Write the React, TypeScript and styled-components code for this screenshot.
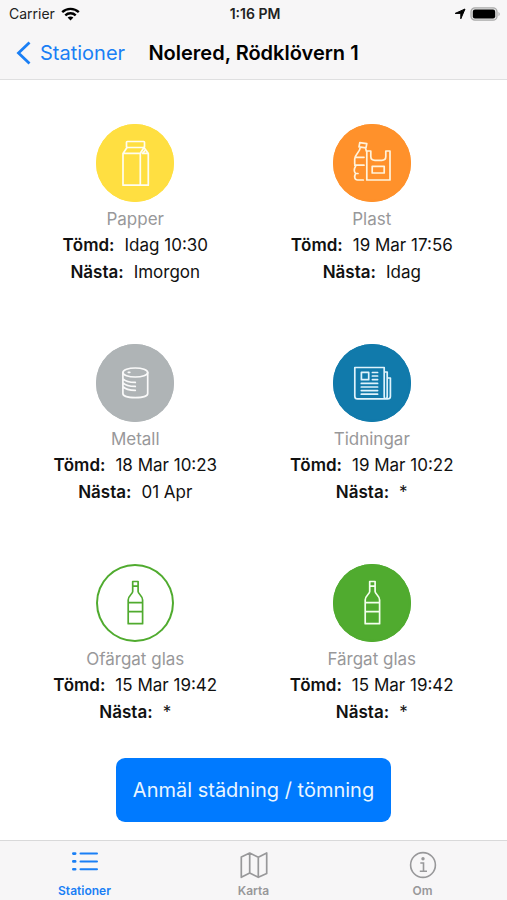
import React from "react";
import styled, { createGlobalStyle } from "styled-components";

const GlobalStyle = createGlobalStyle`
  * { box-sizing: border-box; }
  html, body { margin: 0; padding: 0; background: #fff; }
  body, button { font-family: Inter, "Liberation Sans", sans-serif; }
`;

const Screen = styled.div`
  display: flex;
  flex-direction: column;
  min-height: 100vh;
  background: #fff;
  color: #111;
`;

const Header = styled.header`
  background: #f7f6f7;
  border-bottom: 1px solid #dfdfe0;
`;

const StatusBar = styled.div`
  display: grid;
  grid-template-columns: 1fr auto 1fr;
  align-items: center;
  height: 27px;
  padding: 0 6px 0 9px;
  font-size: 14px;
  line-height: 20px;
  color: #222;
`;

const StatusGroup = styled.div<{ $end?: boolean }>`
  display: flex;
  align-items: center;
  gap: ${(p) => (p.$end ? "4px" : "6px")};
  justify-content: ${(p) => (p.$end ? "flex-end" : "flex-start")};
`;

const Clock = styled.time`
  font-size: 14px;
  font-weight: 600;
`;

const NavBar = styled.nav`
  display: grid;
  grid-template-columns: 1fr auto 1fr;
  align-items: center;
  height: 52px;
  padding: 0 16px;
`;

const BackButton = styled.button`
  display: flex;
  align-items: center;
  gap: 9px;
  padding: 0;
  border: 0;
  background: none;
  color: #1a7ff5;
  font-size: 20px;
  line-height: 26px;
  cursor: pointer;
`;

const Title = styled.h1`
  margin: 0;
  font-size: 20px;
  line-height: 26px;
  font-weight: 600;
  color: #000;
  white-space: nowrap;
`;

const Main = styled.main`
  flex: 1;
  display: flex;
  flex-direction: column;
  align-items: center;
  padding: 44px 17px 18px;
`;

const StationGrid = styled.div`
  display: grid;
  grid-template-columns: 1fr 1fr;
  row-gap: 58px;
  width: 100%;
`;

const Fraction = styled.section`
  display: flex;
  flex-direction: column;
  align-items: center;
`;

const Disc = styled.div<{ $fill: string; $ring: string; $ink: string }>`
  width: 78px;
  height: 78px;
  border-radius: 50%;
  background: ${(p) => p.$fill};
  box-shadow: inset 0 0 0 2px ${(p) => p.$ring};
  color: ${(p) => p.$ink};
  margin-bottom: 4px;

  svg { display: block; }
`;

const FractionName = styled.h2`
  margin: 0;
  font-size: 17px;
  line-height: 26px;
  font-weight: 400;
  color: #98989a;
`;

const Times = styled.dl`
  display: flex;
  flex-direction: column;
  align-items: center;
  margin: 0;
`;

const TimeRow = styled.div`
  display: flex;
  gap: 10px;
  font-size: 17px;
  line-height: 27px;
`;

const TimeLabel = styled.dt`
  font-weight: 600;
`;

const TimeValue = styled.dd`
  margin: 0;
`;

const ReportButton = styled.button`
  margin-top: 32px;
  padding: 18px 17px;
  border: 0;
  border-radius: 9px;
  background: #007aff;
  color: #e9f5ff;
  font-size: 20px;
  line-height: 28px;
  cursor: pointer;
`;

const TabBar = styled.nav`
  display: grid;
  grid-template-columns: repeat(3, 1fr);
  height: 61px;
  background: #f7f6f7;
  border-top: 1px solid #d9d9da;
`;

const Tab = styled.button<{ $active?: boolean }>`
  display: flex;
  flex-direction: column;
  align-items: center;
  justify-content: flex-end;
  gap: 4px;
  padding: 0 0 2px;
  border: 0;
  background: none;
  color: ${(p) => (p.$active ? "#1a7ff5" : "#98989a")};
  font-size: 12px;
  line-height: 16px;
  font-weight: 600;
  cursor: pointer;
`;

const Drawing = ({ children }: { children: React.ReactNode }) => (
  <svg
    width="78"
    height="78"
    viewBox="0 0 78 78"
    fill="none"
    stroke="currentColor"
    strokeWidth="1.7"
    strokeLinejoin="round"
    strokeLinecap="round"
    aria-hidden="true"
  >
    {children}
  </svg>
);

const CartonIcon = () => (
  <Drawing>
    <rect x="30.5" y="17.5" width="18" height="6" rx="0.8" />
    <path d="M31 23.5 27 29.5V61.2H52.3V29.5L48 23.5M27 29.3H44.3M44.3 61V29.3L48 23.5M49.5 26 46.5 29.3H52.3" />
  </Drawing>
);

const PlasticIcon = () => (
  <Drawing>
    <path d="M26.8 18.7 33.8 19.7 33 23.8 26 22.8ZM27.2 23.5C27.2 28 22 30 21.7 35V40L22.6 42.2C20.5 45.5 21.3 48 22.6 49.5C21 52.5 21.5 56 24.5 56H30.3M32.5 24 33.3 27M22.3 33.3H31M21.8 41.2H31M22.6 49.5H25" />
    <path d="M33.8 27H37.8V32.5C37.8 35 39.5 36.3 42 36.3H48.8C51.3 36.3 52.8 35 52.8 32.5V27H57V56H33.8Z" />
    <rect x="39.2" y="42.3" width="12" height="6.7" />
  </Drawing>
);

const CanIcon = () => (
  <Drawing>
    <ellipse cx="39.3" cy="28.5" rx="12.4" ry="4.5" />
    <path d="M26.9 28.5V49.5C26.9 52 32 53.7 39.3 53.7S51.7 52 51.7 49.5V28.5M32.3 28.3H33.8M27.2 35C29.5 37.7 34 38.4 39.3 38.4M27.2 39C29.5 41.7 34 42.4 39.3 42.4M27.2 42.9C29.5 45.6 34 46.3 39.3 46.3" />
  </Drawing>
);

const NewspaperIcon = () => (
  <Drawing>
    <path d="M21.8 23.5H51.2V52.5Q51.2 54.9 53 54.9H24.5Q21.8 54.9 21.8 52.2ZM51.2 28H54.2V52.3Q54.2 54.9 52.5 54.9H54.6Q57.4 54.9 57.4 52.2V34H54.2" />
    <rect x="28.4" y="28.4" width="7.3" height="7.3" />
    <path d="M39.4 28.5H44.6M39.4 32H44.6M39.4 35.6H44.6M28.3 39.4H44.6M28.3 43H44.6M28.3 46.6H44.6M28.3 50.2H44.6" />
  </Drawing>
);

const BottleIcon = () => (
  <Drawing>
    <path d="M36.7 17.5H42.1V27.5C42.1 30 46.6 31.5 46.6 36V59.7H32.2V36C32.2 31.5 36.7 30 36.7 27.5ZM36.7 22.2H42.1M32.2 38.7H46.6M32.2 47.7H46.6" />
  </Drawing>
);

const WifiIcon = () => (
  <svg width="19" height="14" viewBox="0 0 19 14" fill="none" stroke="#000" strokeWidth="2.4" aria-hidden="true">
    <path d="M1.2 5.1C5.8.8 13.2.8 17.8 5.1M4.3 8.3C7.2 5.6 11.8 5.6 14.7 8.3" />
    <path d="M9.5 13.4 6.6 10.5C8.2 9 10.8 9 12.4 10.5Z" fill="#000" stroke="none" />
  </svg>
);

const LocationIcon = () => (
  <svg width="12" height="12" viewBox="0 0 12 12" aria-hidden="true">
    <path d="M11 1 6.8 10.8V5.4H1.2Z" fill="#000" stroke="#000" strokeWidth="1" strokeLinejoin="round" />
  </svg>
);

const BatteryIcon = () => (
  <svg width="31" height="14" viewBox="0 0 31 14" aria-hidden="true">
    <rect x="1" y="0.8" width="26" height="12.4" rx="4" fill="#e4e4e4" stroke="#aaa" strokeWidth="1.3" />
    <rect x="2.8" y="2.5" width="22.4" height="9" rx="2.2" fill="#000" />
    <path d="M28.5 4.7Q31 7 28.5 9.3Z" fill="#aaa" />
  </svg>
);

const ChevronIcon = () => (
  <svg width="15" height="24" viewBox="0 0 15 24" fill="none" stroke="currentColor" strokeWidth="2.8" aria-hidden="true">
    <path d="M13.5 1.5 2.5 12 13.5 22.5" />
  </svg>
);

const ListIcon = () => (
  <svg width="28" height="28" viewBox="0 0 28 28" fill="none" stroke="currentColor" strokeWidth="2" strokeLinecap="round" aria-hidden="true">
    <path d="M9.5 2.6H26M9.5 10.4H26M9.5 18.2H26" />
    <path d="M2.3 2.6H4.2M2.3 10.4H4.2M2.3 18.2H4.2" strokeWidth="2.6" />
  </svg>
);

const MapIcon = () => (
  <svg width="28" height="28" viewBox="0 0 28 28" fill="none" stroke="currentColor" strokeWidth="1.7" strokeLinejoin="round" aria-hidden="true">
    <path d="M1.3 6 9.7 2 18.3 6.3 26.7 2V22.5L18.3 26.3 9.7 22 1.3 26.3ZM9.7 2V22M18.3 6.3V26.3" />
  </svg>
);

const InfoIcon = () => (
  <svg width="28" height="28" viewBox="0 0 28 28" fill="none" stroke="currentColor" strokeWidth="1.6" aria-hidden="true">
    <circle cx="14" cy="14" r="12.4" />
    <circle cx="14" cy="7.8" r="1.7" fill="currentColor" stroke="none" />
    <path d="M11.3 12H14.5V20.2M10.8 20.2H18" />
  </svg>
);

const fractions = [
  { name: "Papper", emptied: "Idag 10:30", next: "Imorgon", fill: "#ffdf41", ring: "#ffdf41", ink: "#fffdf0", Icon: CartonIcon },
  { name: "Plast", emptied: "19 Mar 17:56", next: "Idag", fill: "#ff912b", ring: "#ff912b", ink: "#fff3dc", Icon: PlasticIcon },
  { name: "Metall", emptied: "18 Mar 10:23", next: "01 Apr", fill: "#afb4b6", ring: "#afb4b6", ink: "#fafafa", Icon: CanIcon },
  { name: "Tidningar", emptied: "19 Mar 10:22", next: "*", fill: "#117aab", ring: "#117aab", ink: "#dff3fc", Icon: NewspaperIcon },
  { name: "Ofärgat glas", emptied: "15 Mar 19:42", next: "*", fill: "#ffffff", ring: "#50ab2f", ink: "#50ab2f", Icon: BottleIcon },
  { name: "Färgat glas", emptied: "15 Mar 19:42", next: "*", fill: "#50ab2f", ring: "#50ab2f", ink: "#f4ffee", Icon: BottleIcon },
];

export default function App() {
  return (
    <Screen>
      <GlobalStyle />
      <Header>
        <StatusBar>
          <StatusGroup>
            <span>Carrier</span>
            <WifiIcon />
          </StatusGroup>
          <Clock>1:16 PM</Clock>
          <StatusGroup $end>
            <LocationIcon />
            <BatteryIcon />
          </StatusGroup>
        </StatusBar>
        <NavBar>
          <BackButton type="button">
            <ChevronIcon />
            Stationer
          </BackButton>
          <Title>Nolered, Rödklövern 1</Title>
        </NavBar>
      </Header>
      <Main>
        <StationGrid>
          {fractions.map(({ name, emptied, next, fill, ring, ink, Icon }) => (
            <Fraction key={name}>
              <Disc $fill={fill} $ring={ring} $ink={ink}>
                <Icon />
              </Disc>
              <FractionName>{name}</FractionName>
              <Times>
                <TimeRow>
                  <TimeLabel>Tömd:</TimeLabel>
                  <TimeValue>{emptied}</TimeValue>
                </TimeRow>
                <TimeRow>
                  <TimeLabel>Nästa:</TimeLabel>
                  <TimeValue>{next}</TimeValue>
                </TimeRow>
              </Times>
            </Fraction>
          ))}
        </StationGrid>
        <ReportButton type="button">Anmäl städning / tömning</ReportButton>
      </Main>
      <TabBar>
        <Tab type="button" $active>
          <ListIcon />
          Stationer
        </Tab>
        <Tab type="button">
          <MapIcon />
          Karta
        </Tab>
        <Tab type="button">
          <InfoIcon />
          Om
        </Tab>
      </TabBar>
    </Screen>
  );
}
